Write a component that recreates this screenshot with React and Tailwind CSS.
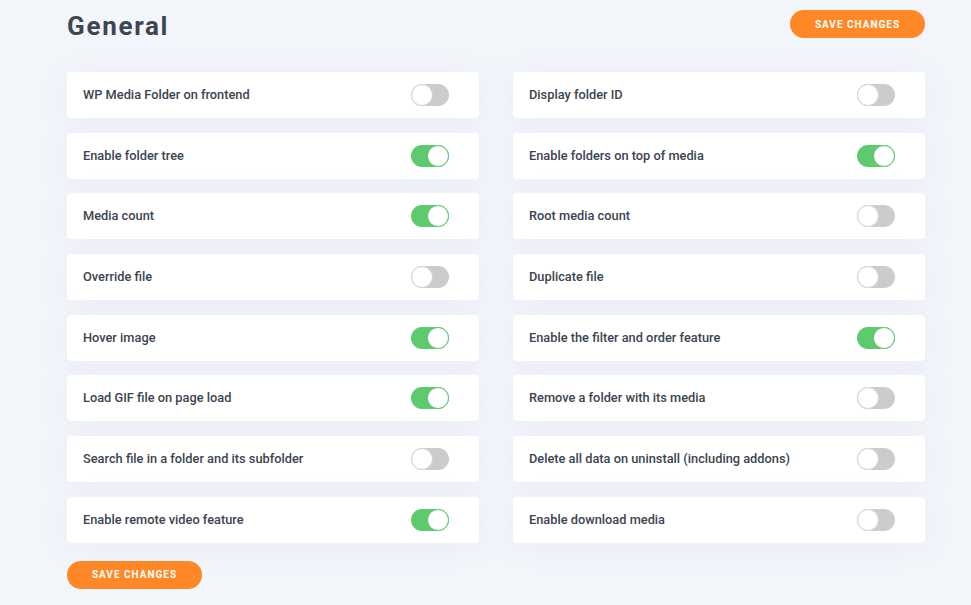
import React, { useState } from "react";

const leftItems = [
  ["WP Media Folder on frontend", false],
  ["Enable folder tree", true],
  ["Media count", true],
  ["Override file", false],
  ["Hover image", true],
  ["Load GIF file on page load", true],
  ["Search file in a folder and its subfolder", false],
  ["Enable remote video feature", true],
];

const rightItems = [
  ["Display folder ID", false],
  ["Enable folders on top of media", true],
  ["Root media count", false],
  ["Duplicate file", false],
  ["Enable the filter and order feature", true],
  ["Remove a folder with its media", false],
  ["Delete all data on uninstall (including addons)", false],
  ["Enable download media", false],
];

const Toggle = ({ on, onClick }) => (
  <button
    onClick={onClick}
    className={`relative w-[38px] h-[22px] rounded-full transition-colors ${on ? "bg-[#5dca6f]" : "bg-[#cccccc]"}`}
  >
    <span
      className={`absolute top-0 w-[22px] h-[22px] rounded-full bg-white border ${on ? "left-[16px] border-[#5dca6f]" : "left-0 border-[#d5d5d5]"}`}
    />
  </button>
);

const SaveButton = () => (
  <button className="w-[135px] h-[28px] rounded-full bg-[#ff8726] text-white text-[10px] font-bold tracking-[1px] uppercase">
    Save changes
  </button>
);

const App = () => {
  const [items, setItems] = useState(() => {
    const out = [];
    for (let i = 0; i < 8; i++) out.push(leftItems[i], rightItems[i]);
    return out;
  });

  const flip = (idx) =>
    setItems((prev) => prev.map((it, i) => (i === idx ? [it[0], !it[1]] : it)));

  return (
    <div className="bg-[#f2f5fa] min-h-screen w-[971px] h-[605px] overflow-hidden font-['Roboto',sans-serif]">
      <div className="ml-[67px] w-[858px] pt-[10px]">
        <div className="flex justify-between items-start h-[62px]">
          <h1 className="text-[26px] leading-[30px] mt-[1px] font-bold tracking-[1.7px] text-[#3d4552]">General</h1>
          <SaveButton />
        </div>

        <div className="grid grid-cols-2 gap-x-[34px] gap-y-[14.7px]">
          {items.map(([label, on], idx) => (
            <div
              key={label}
              className="h-[46px] bg-white rounded-[4px] flex items-center justify-between pl-[16px] pr-[30px] shadow-[0_4px_24px_rgba(180,190,210,0.12)]"
            >
              <span className="text-[12.8px] leading-[15px] -mt-[1px] font-medium text-[#3c4451]">
                {label}
              </span>
              <Toggle on={on} onClick={() => flip(idx)} />
            </div>
          ))}
        </div>

        <div className="mt-[18px]">
          <SaveButton />
        </div>
      </div>
    </div>
  );
};

export default App;
